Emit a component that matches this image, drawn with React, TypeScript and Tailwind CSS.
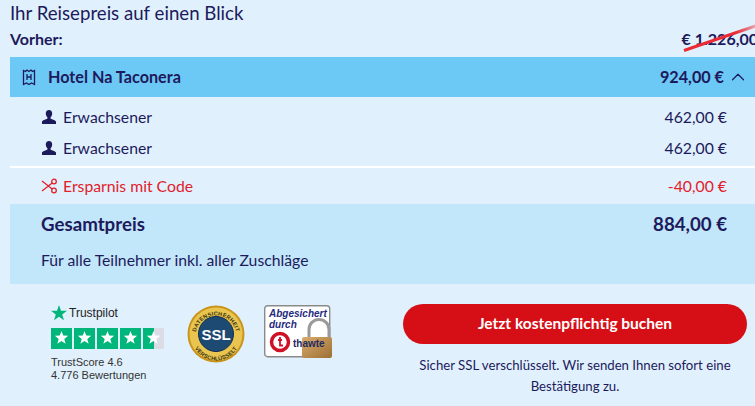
import React from "react";
import { ChevronUp } from "lucide-react";

const NAVY = "text-[#1d1a5c]";

const HotelIcon = () => (
  <svg viewBox="0 0 14 18" className="h-[18px] w-[14px]" fill="none" stroke="#1d1a5c" strokeWidth="1.3">
    <path d="M1.500 16.500V2.500l2 1 1.500-1.500 2 1.500 2-1.500 1.500 1.500 2-1v14l-3-1.500-2.500 1.500-2.500-1.500z" />
    <path d="M5 6v6M9 6v6M5 9h4" />
  </svg>
);

const PersonIcon = () => (
  <svg viewBox="0 0 14 14" className="h-[14px] w-[14px]" fill="#1d1a5c">
    <path d="M7 0c2 0 3.200 1.400 3.200 3.400 0 1.500-.7 3-1.600 3.800v1.200c0 .7 4.900 1.300 5.400 3V14H0v-2.600c.5-1.700 5.400-2.300 5.400-3V7.200C4.500 6.400 3.800 4.900 3.800 3.400 3.800 1.400 5 0 7 0z" />
  </svg>
);

const ScissorsIcon = () => (
  <svg viewBox="0 0 16 16" className="h-[16px] w-[16px]" fill="none" stroke="#e2202b" strokeWidth="1.3">
    <circle cx="13" cy="3.500" r="2.300" />
    <circle cx="13" cy="12.500" r="2.300" />
    <path d="M11.200 5 1 13M11.200 11 1 3" />
  </svg>
);

const Star = ({ x, size }: { x: number; size: number }) => {
  const c = size / 2;
  const pts = Array.from({ length: 10 }, (_, i) => {
    const r = i % 2 === 0 ? c : c * 0.42;
    const a = (Math.PI / 5) * i - Math.PI / 2;
    return `${x + r * Math.cos(a)},${c + r * Math.sin(a)}`;
  }).join(" ");
  return <polygon points={pts} fill="#fff" />;
};

const TrustStars = () => (
  <svg viewBox="0 0 113 21" className="h-[21px] w-[113px]">
    {[0, 23, 46, 69].map((x) => (
      <g key={x}>
        <rect x={x} width="21" height="21" fill="#00b67a" />
        <g transform="translate(0 3)">
          <Star x={x + 10.5} size={14} />
        </g>
      </g>
    ))}
    <rect x="92" width="21" height="21" fill="#dcdce6" />
    <rect x="92" width="11" height="21" fill="#00b67a" />
    <g transform="translate(0 3)">
      <Star x={102.5} size={14} />
    </g>
  </svg>
);

const SslBadge = () => (
  <svg viewBox="0 0 58 58" className="h-[58px] w-[58px]">
    <defs>
      <path id="sslTop" d="M8.500 31a20.500 20.500 0 0 1 41 0" />
      <path id="sslBottom" d="M4.500 31a24.500 24.500 0 0 0 49 0" />
    </defs>
    <circle cx="29" cy="29" r="28.500" fill="#c9951c" />
    <circle cx="29" cy="29" r="26.500" fill="#e9c44e" />
    <circle cx="29" cy="29" r="17.500" fill="#1d4a73" />
    <circle cx="29" cy="29" r="17.500" fill="none" stroke="#0f2f50" strokeWidth="1" />
    <text fontFamily="Liberation Sans" fontSize="5.600" fontWeight="700" fill="#3b3413" letterSpacing="0.2">
      <textPath href="#sslTop" startOffset="50%" textAnchor="middle">DATENSICHERHEIT</textPath>
    </text>
    <text fontFamily="Liberation Sans" fontSize="5.600" fontWeight="700" fill="#3b3413" letterSpacing="0.2">
      <textPath href="#sslBottom" startOffset="50%" textAnchor="middle">VERSCHLÜSSELT</textPath>
    </text>
    <text x="29" y="34.500" textAnchor="middle" fontFamily="Liberation Sans" fontSize="15" fontWeight="700" fill="#fff">SSL</text>
  </svg>
);

const ThawteBadge = () => (
  <svg viewBox="0 0 68 54" className="h-[54px] w-[68px]">
    <defs>
      <linearGradient id="lockBody" x1="0" y1="0" x2="1" y2="1">
        <stop offset="0" stopColor="#d9ab6c" />
        <stop offset="1" stopColor="#9c6f35" />
      </linearGradient>
    </defs>
    <rect x="0.700" y="0.700" width="65" height="51" rx="3" fill="#fff" stroke="#8a8a8a" strokeWidth="1.400" />
    <path d="M45 33v-8.500a10 10 0 0 1 20 0V33" fill="none" stroke="#9a9a9a" strokeWidth="3" />
    <rect x="38" y="32" width="30" height="21" rx="2" fill="url(#lockBody)" />
    <text x="5" y="12" fontFamily="Liberation Sans" fontSize="10" fontWeight="700" fontStyle="italic" fill="#1f2a80">Abgesichert</text>
    <text x="5" y="23" fontFamily="Liberation Sans" fontSize="10" fontWeight="700" fontStyle="italic" fill="#1f2a80">durch</text>
    <circle cx="16" cy="37" r="8.500" fill="none" stroke="#cf1128" strokeWidth="3.500" />
    <path d="M16 32v8.500h3M14 35h4" fill="none" stroke="#cf1128" strokeWidth="1.800" />
    <text x="29" y="42" fontFamily="Liberation Sans" fontSize="10" fontWeight="700" fill="#1f2a60">thawte</text>
  </svg>
);

const LineRow = ({ label, amount }: { label: string; amount: string }) => (
  <div className="flex h-[31px] items-center justify-between pl-[32px] pr-[28px]">
    <div className="flex items-center gap-[7px]">
      <PersonIcon />
      <span>{label}</span>
    </div>
    <span>{amount}</span>
  </div>
);

export default function App() {
  return (
    <div className={`h-[406px] w-[755px] overflow-hidden bg-[#e0f1fd] font-['Lato','Noto_Sans',sans-serif] text-[15.75px] ${NAVY}`}>
      <div className="pl-[10px]">
        <h2 className="h-[28px] pt-[1px] text-[18.65px] leading-[24px]">Ihr Reisepreis auf einen Blick</h2>
        <div className="flex h-[29px] items-start justify-between">
          <span className="pt-[1px] text-[16px] leading-[20px] font-bold">Vorher:</span>
          <div className="relative overflow-visible">
            <span className="-mr-[3px] block text-[16px] leading-[22px] font-bold whitespace-nowrap">€ 1.226,00</span>
            <span className="absolute top-[21px] left-[2px] h-[3px] w-[78px] origin-left -rotate-[19deg] bg-linear-to-r from-[#ea2a35] from-70% to-[#ea2a35]/30" />
          </div>
        </div>

        <div className="flex h-[40px] items-center justify-between bg-[#6cc8f5] pr-[6px] pl-[12px] text-[16.2px] font-bold">
          <div className="flex items-center gap-[12px]">
            <HotelIcon />
            <span>Hotel Na Taconera</span>
          </div>
          <div className="flex items-center gap-[3px]">
            <span>924,00 €</span>
            <ChevronUp className="h-[22px] w-[22px]" strokeWidth={1.3} />
          </div>
        </div>

        <div className="pt-[4px]">
          <LineRow label="Erwachsener" amount="462,00 €" />
          <LineRow label="Erwachsener" amount="462,00 €" />
        </div>
        <div className="mt-[3px] h-[2px] bg-white" />
        <div className="flex h-[36px] items-center justify-between pr-[28px] pl-[31px] text-[#e2202b]">
          <div className="flex items-center gap-[6px]">
            <ScissorsIcon />
            <span>Ersparnis mit Code</span>
          </div>
          <span>-40,00 €</span>
        </div>

        <div className="h-[80px] bg-[#c2e6fa] pr-[28px] pl-[31px]">
          <div className="flex h-[40px] items-center justify-between text-[18.7px] font-bold">
            <span>Gesamtpreis</span>
            <span>884,00 €</span>
          </div>
          <p className="pt-[4px] leading-[24px]">Für alle Teilnehmer inkl. aller Zuschläge</p>
        </div>
      </div>

      <div className="flex pt-[20px] pr-[8px] pl-[51px]">
        <div className="w-[133px] pt-[1px]">
          <div className="flex items-center gap-[2px] font-['Liberation_Sans',sans-serif] text-[12px] leading-[16px] font-medium text-[#222]">
            <svg viewBox="0 0 16 16" className="h-[16px] w-[16px]">
              <polygon points="8,0 10,5.800 16,5.800 11.200,9.400 13,15.300 8,11.700 3,15.300 4.800,9.400 0,5.800 6,5.800" fill="#00b67a" />
            </svg>
            <span>Trustpilot</span>
          </div>
          <div className="mt-[7px] flex h-[21px]">
            <TrustStars />
          </div>
          <p className="mt-[7px] font-['Liberation_Sans',sans-serif] text-[11px] leading-[13px] text-[#333]">
            TrustScore 4.6
            <br />
            4.776 Bewertungen
          </p>
        </div>
        <div className="ml-[3px] pt-[1px]">
          <SslBadge />
        </div>
        <div className="ml-[19px] pt-[1px]">
          <ThawteBadge />
        </div>
        <div className="ml-[71px] flex-1">
          <button className="h-[40px] w-full rounded-full bg-[#d60f17] text-[15.5px] font-bold text-white">
            Jetzt kostenpflichtig buchen
          </button>
          <p className="mx-auto mt-[11px] w-[330px] text-center text-[13.2px] leading-[21px]">
            Sicher SSL verschlüsselt. Wir senden Ihnen sofort eine Bestätigung zu.
          </p>
        </div>
      </div>
    </div>
  );
}
